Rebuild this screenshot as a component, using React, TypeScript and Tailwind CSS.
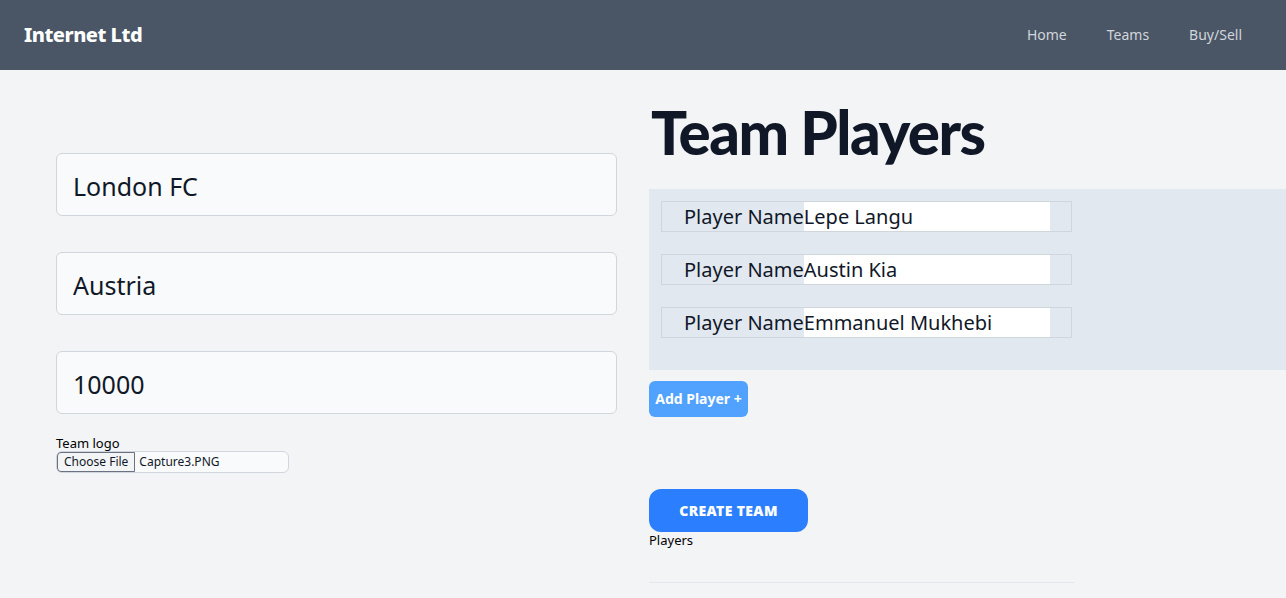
import React from 'react';

const players = ['Lepe Langu', 'Austin Kia', 'Emmanuel Mukhebi'];

const Header: React.FC = () => (
  <header className="h-[70px] bg-gray-600 flex items-center justify-between pl-6 pr-11">
    <span className="text-white font-extrabold text-[20px] tracking-tight">Internet Ltd</span>
    <nav className="flex items-center gap-10 text-sm text-gray-300">
      <a>Home</a>
      <a>Teams</a>
      <a>Buy/Sell</a>
    </nav>
  </header>
);

const App: React.FC = () => {
  return (
    <div className="min-h-[598px] bg-gray-100 text-gray-900 font-['Noto_Sans',sans-serif] overflow-hidden">
      <Header />
      <main className="flex">
        {/* team form */}
        <div className="w-[649px] pl-14 pr-8 pt-[83px] flex flex-col">
          <div className="flex flex-col gap-9">
            <input
              readOnly
              value="London FC"
              className="h-[63px] w-full rounded-md border border-gray-300 bg-gray-50 px-4 pt-[2px] text-[25px]"
            />
            <input
              readOnly
              value="Austria"
              className="h-[63px] w-full rounded-md border border-gray-300 bg-gray-50 px-4 pt-[2px] text-[25px]"
            />
            <input
              readOnly
              value="10000"
              className="h-[63px] w-full rounded-md border border-gray-300 bg-gray-50 px-4 pt-[2px] text-[25px]"
            />
          </div>
          <label className="mt-[22px] text-[13px] leading-[15px] text-black">Team logo</label>
          <div className="flex w-[233px] h-[22px] items-center rounded-md border border-gray-300 bg-gray-50 text-[12px]">
            <span className="h-full px-[6px] flex items-center border border-gray-500 bg-gray-100 rounded-l-sm">Choose File</span>
            <span className="pl-1">Capture3.PNG</span>
          </div>
        </div>

        {/* players */}
        <div className="flex-1 pt-[28px]">
          <h1 className="text-6xl font-black font-['Lato',sans-serif] tracking-tight text-gray-900 leading-[68px] mb-[23px] pl-[2px]">Team Players</h1>
          <div className="bg-slate-200 h-[181px] px-3 pt-3 flex flex-col gap-[22px]">
            {players.map((p) => (
              <div key={p} className="w-[411px] h-[31px] border border-gray-300 flex items-stretch pl-[22px] pr-[21px]">
                <span className="text-xl leading-[29px] whitespace-nowrap">Player Name</span>
                <input readOnly value={p} className="flex-1 bg-white text-xl px-0 min-w-0" />
              </div>
            ))}
          </div>
          <button className="mt-[11px] h-9 w-[99px] rounded-md bg-blue-400 text-white font-bold text-sm">
            Add Player +
          </button>
          <div className="mt-[72px]">
            <button className="h-[43px] w-[159px] rounded-xl bg-blue-500 text-white font-black text-sm uppercase tracking-wide">
              Create Team
            </button>
          </div>
          <p className="text-[13px] leading-4 text-black">Players</p>
          <hr className="mt-[34px] w-[426px] border-gray-200" />
        </div>
      </main>
    </div>
  );
};

export default App;
